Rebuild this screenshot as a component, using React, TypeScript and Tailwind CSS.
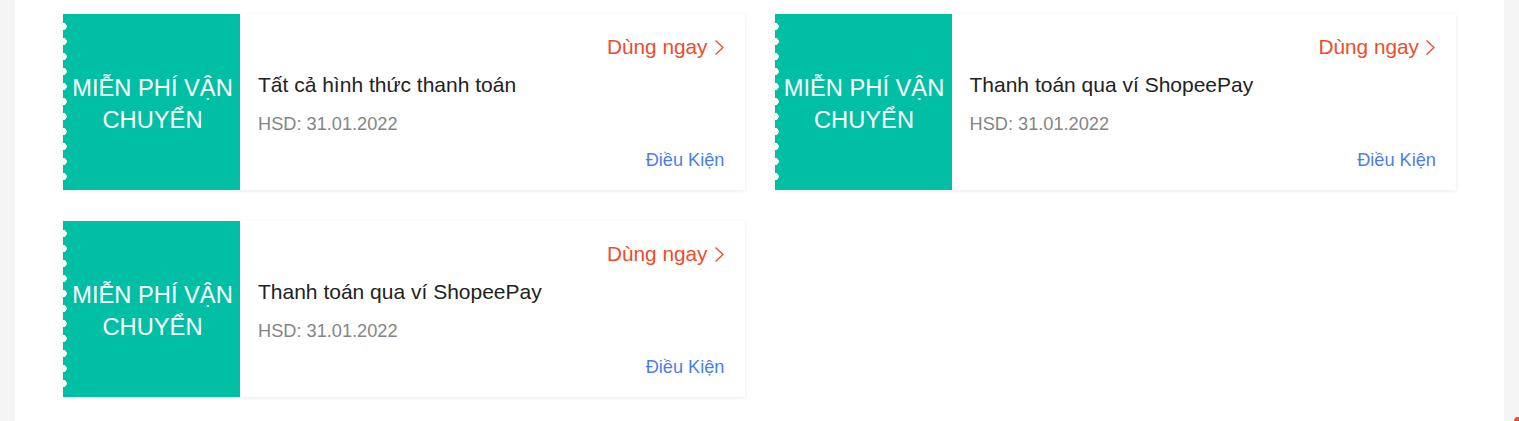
import { ReactNode } from 'react';

type Voucher = {
  id: number;
  title: string;
  expiry: string;
};

const vouchers: Voucher[] = [
  { id: 1, title: 'Tất cả hình thức thanh toán', expiry: '31.01.2022' },
  { id: 2, title: 'Thanh toán qua ví ShopeePay', expiry: '31.01.2022' },
  { id: 3, title: 'Thanh toán qua ví ShopeePay', expiry: '31.01.2022' },
];

function Chevron() {
  return (
    <svg width="11" height="17" viewBox="0 0 11 17" fill="none" className="ml-[6px]">
      <polyline points="1.5,1.5 9,8.5 1.5,15.5" stroke="#ee4d2d" strokeWidth="1.3" />
    </svg>
  );
}

function Ticket({ children }: { children: ReactNode }) {
  return (
    <div className="relative w-[177px] shrink-0 bg-[#00bfa5] flex items-center justify-center">
      {/* sawtooth edge */}
      <div className="absolute left-0 top-[4.5px] h-[165px] w-[4px] bg-[radial-gradient(circle_at_0_7.5px,#ffffff_3.5px,#00bfa5_4px)] bg-[length:4px_15px]" />
      <div className="text-white text-[23.7px] leading-[32px] text-center pl-[2px] pt-[3px] whitespace-nowrap">{children}</div>
    </div>
  );
}

function VoucherCard({ voucher }: { voucher: Voucher }) {
  return (
    <div className="flex h-[176px] bg-white shadow-[0_1px_4px_rgba(0,0,0,0.09)]">
      <Ticket>
        MIỄN PHÍ VẬN
        <br />
        CHUYỂN
      </Ticket>
      <div className="flex-1 flex flex-col pl-[18px] pr-[20px] pt-[19px]">
        <div className="flex justify-end items-center h-[28px]">
          <span className="text-[#ee4d2d] text-[20.8px]">Dùng ngay</span>
          <Chevron />
        </div>
        <div className="mt-[10px] text-[#222] text-[21px] leading-[28px]">{voucher.title}</div>
        <div className="mt-[13px] text-[#858585] text-[18.2px] leading-[24px]">HSD: {voucher.expiry}</div>
        <div className="mt-[12px] text-right text-[#4a7fe8] text-[18.2px] leading-[24px]">Điều Kiện</div>
      </div>
    </div>
  );
}

export default function App() {
  return (
    <div
      className="relative h-[421px] bg-[#f5f5f5] px-[15px] overflow-hidden"
      style={{ fontFamily: '"Liberation Sans", Arial, sans-serif' }}
    >
      <div className="h-full bg-white pl-[48px] pr-[48px] pt-[14px]">
        <div className="grid grid-cols-2 gap-x-[30px] gap-y-[31px]">
          {vouchers.map((v) => (
            <VoucherCard key={v.id} voucher={v} />
          ))}
        </div>
      </div>
      <div className="absolute right-0 bottom-0 w-[5px] h-[4px] rounded-tl-full bg-[#ee4d2d]" />
    </div>
  );
}
